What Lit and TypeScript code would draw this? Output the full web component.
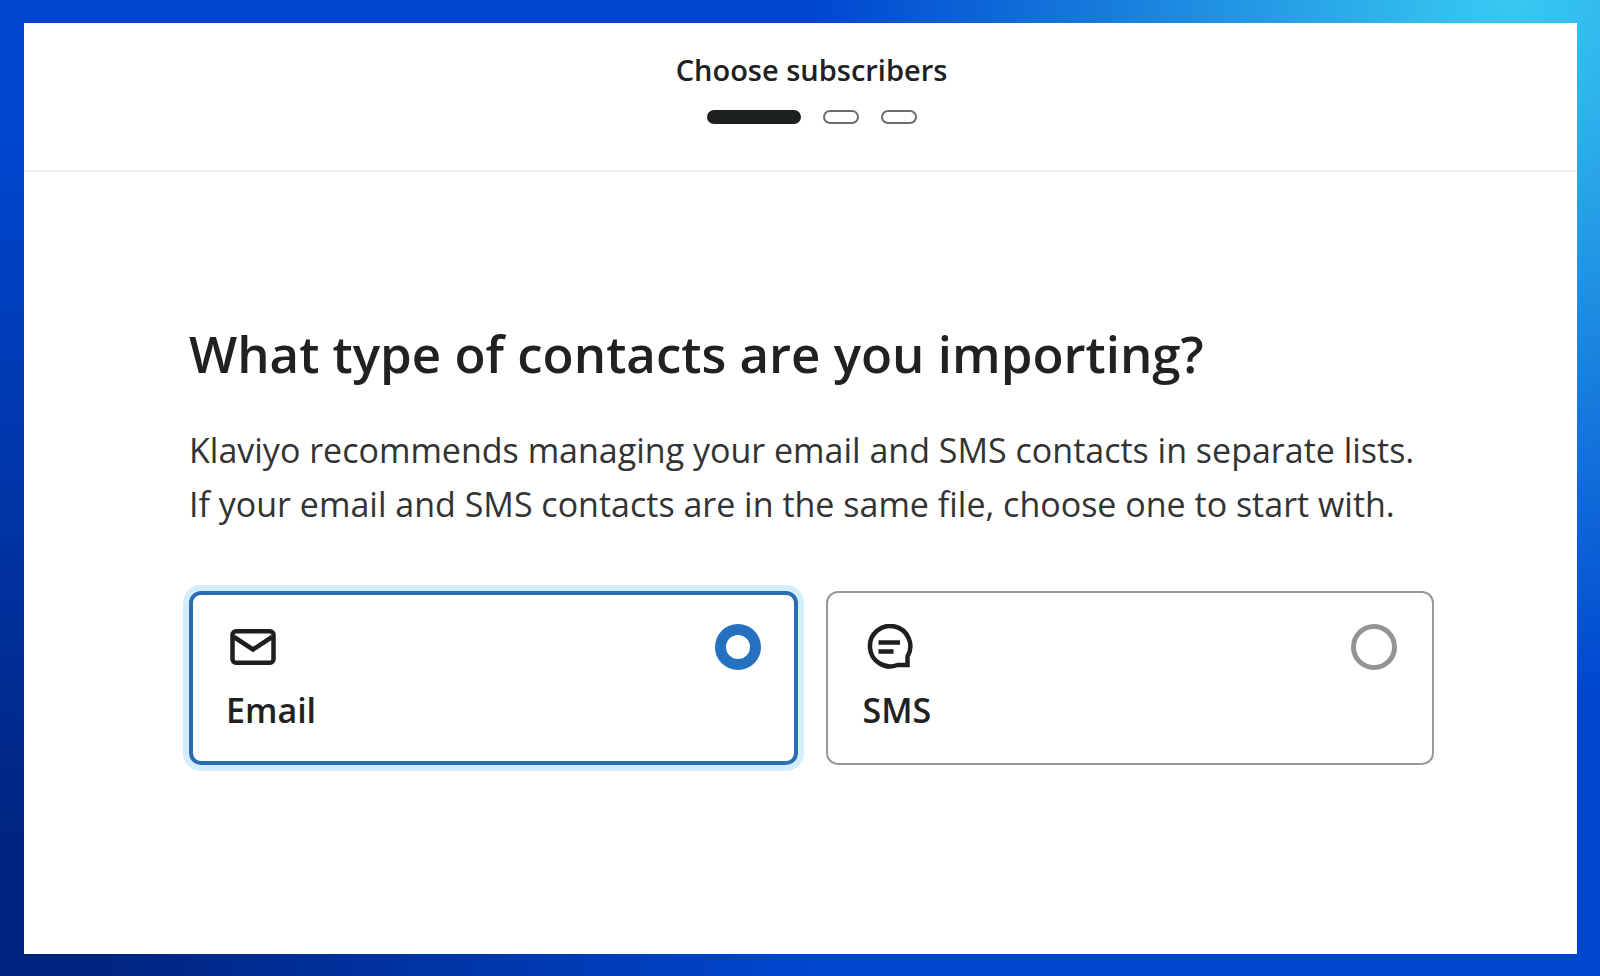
import { LitElement, html, css, svg } from "lit";
import { customElement, property, state } from "lit/decorators.js";

type Channel = "email" | "sms";

const icons = {
  email: svg`
    <rect x="6.5" y="7.2" width="41" height="31.6" rx="3.5"></rect>
    <path d="M8 13 L27 25.5 L46 13"></path>`,
  sms: svg`
    <path d="M44.5 41 V32.5 A20.2 20.2 0 1 0 34.5 41 Z"></path>
    <path d="M15.5 18.5 H37 M15.5 27.5 H30.5"></path>`,
};

@customElement("step-progress")
class StepProgress extends LitElement {
  @property({ type: Number }) total = 3;
  @property({ type: Number }) current = 0;

  static styles = css`
    ol {
      display: flex;
      justify-content: center;
      gap: 22px;
      margin: 0;
      padding: 0;
      list-style: none;
    }
    .step {
      box-sizing: border-box;
      width: 36px;
      height: 14px;
      border: 2px solid #6e6e6e;
      border-radius: 7px;
    }
    .current {
      width: 94px;
      border-color: #1d2020;
      background: #1d2020;
    }
  `;

  render() {
    return html`<ol>
      ${Array.from({ length: this.total }, (_, i) =>
        i === this.current
          ? html`<li class="step current" aria-current="step"></li>`
          : html`<li class="step"></li>`
      )}
    </ol>`;
  }
}

@customElement("app-root")
class AppRoot extends LitElement {
  @state() private selected: Channel = "email";

  static styles = css`
    :host {
      display: block;
      font-family: "Open Sans", "Noto Sans", sans-serif;
      color: #212121;
    }
    .backdrop {
      box-sizing: border-box;
      display: flex;
      min-height: 100vh;
      padding: 23px 23px 22px 24px;
      background:
        radial-gradient(circle at 1510px 0, #37c8f2 0, #32bdee 80px, #1c88e0 340px, rgba(0, 71, 208, 0) 690px),
        radial-gradient(circle at 0 950px, #002480 0, #002480 100px, rgba(0, 71, 208, 0) 820px),
        #0047d0;
    }
    .panel {
      flex: 1;
      background: #fff;
    }
    header {
      padding: 27px 0 46px 22px;
      border-bottom: 2px solid #f0f0f0;
      text-align: center;
    }
    .title {
      margin: 0 0 20px;
      font-size: 29px;
      line-height: 40px;
      font-weight: 600;
    }
    main {
      padding: 147px 143px 48px 165px;
    }
    h1 {
      margin: 0 0 36px;
      font-size: 51px;
      line-height: 68px;
      font-weight: 600;
    }
    .intro {
      margin: 0 0 60px;
      font-size: 34px;
      line-height: 54px;
      color: #333;
    }
    .line {
      display: block;
    }
    .choices {
      display: grid;
      grid-template-columns: 1fr 1fr;
      gap: 28px;
      margin: 0;
      padding: 0;
      border: 0;
    }
    .card {
      box-sizing: border-box;
      display: grid;
      grid-template-columns: 1fr auto;
      row-gap: 17px;
      min-height: 173px;
      padding: 31px 35px 30px;
      border: 2px solid #999;
      border-radius: 12px;
      cursor: pointer;
    }
    .card.selected {
      padding: 29px 33px 28px;
      border: 4px solid #2b6cb3;
      box-shadow: 0 0 0 6px #d3edfc;
    }
    .icon {
      width: 52px;
      height: 46px;
      fill: none;
      stroke: #1f1f1f;
      stroke-width: 4.5;
    }
    .name {
      font-size: 34px;
      line-height: 46px;
      font-weight: 600;
    }
    input {
      appearance: none;
      box-sizing: border-box;
      width: 46px;
      height: 46px;
      margin: 0;
      border: 5px solid #949494;
      border-radius: 50%;
      background: #fff;
    }
    input:checked {
      border: 11px solid #2571c0;
    }
  `;

  private card(value: Channel, label: string) {
    const on = this.selected === value;
    return html`<label class="card ${on ? "selected" : ""}" for=${value}>
      <svg class="icon" viewBox="0 0 52 46" aria-hidden="true">${icons[value]}</svg>
      <input
        type="radio"
        name="channel"
        id=${value}
        .checked=${on}
        @change=${() => (this.selected = value)}
      />
      <span class="name">${label}</span>
    </label>`;
  }

  render() {
    return html`<div class="backdrop">
      <div class="panel">
        <header>
          <p class="title">Choose subscribers</p>
          <step-progress></step-progress>
        </header>
        <main>
          <h1>What type of contacts are you importing?</h1>
          <p class="intro">
            <span class="line">Klaviyo recommends managing your email and SMS contacts in separate lists.</span>
            <span class="line">If your email and SMS contacts are in the same file, choose one to start with.</span>
          </p>
          <fieldset class="choices" aria-label="Contact type">
            ${this.card("email", "Email")} ${this.card("sms", "SMS")}
          </fieldset>
        </main>
      </div>
    </div>`;
  }
}
